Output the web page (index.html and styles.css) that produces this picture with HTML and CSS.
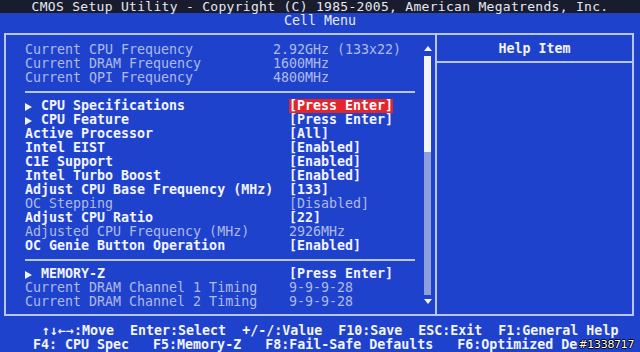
FILE: index.html
```html
<!DOCTYPE html>
<html lang="en">
<head>
    <meta charset="UTF-8">
    <title>CMOS Setup Utility - Cell Menu</title>
    <link rel="stylesheet" href="styles.css">
</head>
<body>

<div class="screen">
    <div class="topbar">CMOS Setup Utility - Copyright (C) 1985-2005, American Megatrends, Inc.</div>
    <div class="menu-title">Cell Menu</div>

    <div class="frame">
        <div class="main">
            <div class="items">
                <div class="row info"><span class="label">Current CPU Frequency</span><span>2.92GHz (133x22)</span></div>
                <div class="row info"><span class="label">Current DRAM Frequency</span><span>1600MHz</span></div>
                <div class="row info"><span class="label">Current QPI Frequency</span><span>4800MHz</span></div>

                <div class="sep"></div>

                <div class="row"><span class="label"><span class="tri"></span>CPU Specifications</span><span class="selected">[Press Enter]</span></div>
                <div class="row"><span class="label"><span class="tri"></span>CPU Feature</span><span>[Press Enter]</span></div>
                <div class="row"><span class="label">Active Processor</span><span>[All]</span></div>
                <div class="row"><span class="label">Intel EIST</span><span>[Enabled]</span></div>
                <div class="row"><span class="label">C1E Support</span><span>[Enabled]</span></div>
                <div class="row"><span class="label">Intel Turbo Boost</span><span>[Enabled]</span></div>
                <div class="row"><span class="label">Adjust CPU Base Frequency (MHz)</span><span>[133]</span></div>
                <div class="row dim"><span class="label">OC Stepping</span><span>[Disabled]</span></div>
                <div class="row"><span class="label">Adjust CPU Ratio</span><span>[22]</span></div>
                <div class="row dim"><span class="label">Adjusted CPU Frequency (MHz)</span><span>2926MHz</span></div>
                <div class="row"><span class="label">OC Genie Button Operation</span><span>[Enabled]</span></div>

                <div class="sep"></div>

                <div class="row"><span class="label"><span class="tri"></span>MEMORY-Z</span><span>[Press Enter]</span></div>
                <div class="row dim"><span class="label">Current DRAM Channel 1 Timing</span><span>9-9-9-28</span></div>
                <div class="row dim"><span class="label">Current DRAM Channel 2 Timing</span><span>9-9-9-28</span></div>
            </div>

            <div class="scrollbar">
                <span class="arrow up"></span>
                <div class="track"><div class="thumb"></div></div>
                <span class="arrow down"></span>
            </div>
        </div>

        <div class="help">
            <div class="help-title">Help Item</div>
        </div>
    </div>

    <div class="footer">
        <div class="keys first">&#8593;&#8595;&#8592;&#8594;:Move  Enter:Select  +/-/:Value  F10:Save  ESC:Exit  F1:General Help</div>
        <div class="keys second">
            <span class="keys-text">F4: CPU Spec   F5:Memory-Z   F8:Fail-Safe Defaults   F6:Optimized De</span>
            <span class="watermark">#1338717</span>
        </div>
    </div>
</div>

</body>
</html>
```

FILE: styles.css
```css
body {
    margin: 0;
    padding: 0;
    background-color: #1f42cc;
    font-family: 'DejaVu Sans Mono', 'Liberation Mono', monospace;
    font-size: 13.3px;
    color: #f2f4ff;
}
.screen {
    width: 640px;
    height: 352px;
    overflow: hidden;
    background-color: #1f42cc;
}
.topbar {
    height: 13px;
    line-height: 13px;
    background-color: #191c2c;
    color: #e6e8f4;
    font-size: 13px;
    text-align: center;
    white-space: pre;
    letter-spacing: 0.3px;
}
.menu-title {
    height: 20px;
    line-height: 16px;
    text-align: center;
    color: #e6e8f4;
}

/* main double panel */
.frame {
    display: grid;
    grid-template-columns: 1fr 197px;
    width: 626px;
    height: 279px;
    margin-left: 4px;
    border: 2px solid #b8c6f2;
}
.main {
    display: flex;
}
.items {
    flex: 1;
    padding: 8px 8px 0 19px;
}
.row {
    display: grid;
    grid-template-columns: 264px 1fr;
    height: 14px;
    line-height: 14px;
    white-space: pre;
    font-weight: bold;
    color: #f2f4ff;
}
.row.info {
    grid-template-columns: 248px 1fr;
}
.row.info,
.row.dim {
    font-weight: normal;
    color: #aebbe8;
}
.tri {
    display: inline-block;
    width: 0;
    height: 0;
    margin-right: 9px;
    border-left: 7px solid #f2f4ff;
    border-top: 4px solid transparent;
    border-bottom: 4px solid transparent;
    vertical-align: -1px;
}
.selected {
    justify-self: start;
    background-color: #e2262c;
    color: #fff;
}
.sep {
    height: 2px;
    margin: 6px 0 6px 0;
    background-color: #b8c6f2;
}

/* scrollbar */
.scrollbar {
    width: 9px;
    margin-right: 3px;
    padding: 11px 0 10px 0;
    display: flex;
    flex-direction: column;
    align-items: center;
}
.arrow {
    width: 0;
    height: 0;
    border-left: 4px solid transparent;
    border-right: 4px solid transparent;
}
.arrow.up {
    border-bottom: 5px solid #f2f4ff;
    margin-bottom: 5px;
}
.arrow.down {
    border-top: 5px solid #f2f4ff;
    margin-top: 4px;
}
.track {
    flex: 1;
    width: 7px;
    background-color: #8f9fdc;
}
.thumb {
    height: 96px;
    background-color: #f2f4ff;
}

/* help panel */
.help {
    border-left: 2px solid #b8c6f2;
}
.help-title {
    height: 26px;
    line-height: 28px;
    text-align: center;
    font-weight: bold;
    border-bottom: 2px solid #b8c6f2;
}

/* key legend */
.footer {
    padding-top: 8px;
    font-weight: bold;
}
.keys {
    height: 14px;
    line-height: 14px;
    white-space: pre;
}
.keys.first {
    padding-left: 42px;
}
.keys.second {
    display: flex;
    align-items: center;
    padding-left: 33px;
}
.keys-text {
    white-space: pre;
}
.watermark {
    margin-left: 1px;
    font-family: 'DejaVu Sans', sans-serif;
    font-size: 11px;
    font-weight: normal;
    letter-spacing: -0.3px;
    color: #fff;
    text-shadow: 1px 0 0 #000, -1px 0 0 #000, 0 1px 0 #000, 0 -1px 0 #000;
}
```
